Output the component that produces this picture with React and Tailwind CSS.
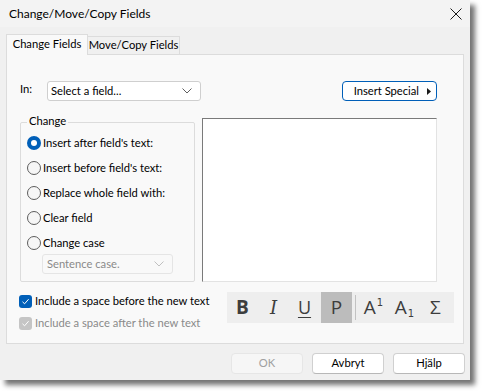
import React from "react";

const F = "font-['Segoe_UI','Lato',sans-serif]";
const T = "text-[11.2px]";

function Radio({ checked, label }) {
  return (
    <div className="flex items-center h-[14px]">
      {checked ? (
        <span className="w-[14px] h-[14px] rounded-full bg-[#005fb8] flex items-center justify-center shrink-0">
          <span className="w-[6px] h-[6px] rounded-full bg-white" />
        </span>
      ) : (
        <span className="w-[14px] h-[14px] rounded-full border border-[#5d5d5d] bg-[#f6f6f6] shrink-0" />
      )}
      <span className={"ml-[2px] text-black leading-none whitespace-nowrap " + T}>{label}</span>
    </div>
  );
}

function Check({ disabled, label }) {
  return (
    <div className="flex items-center h-[14px]">
      <span
        className={
          "w-[13px] h-[13px] rounded-[3px] flex items-center justify-center shrink-0 " +
          (disabled ? "bg-[#c5c5c5]" : "bg-[#005fb8]")
        }
      >
        <svg width="9" height="9" viewBox="0 0 9 9">
          <path d="M1.5 4.8 L3.6 6.8 L7.6 2.2" fill="none" stroke="white" strokeWidth="1" />
        </svg>
      </span>
      <span
        className={
          "ml-[3px] leading-none whitespace-nowrap " + T + " " +
          (disabled ? "text-[#8a8a8a]" : "text-black")
        }
      >
        {label}
      </span>
    </div>
  );
}

function Chevron({ color = "#5f5f5f" }) {
  return (
    <svg width="10" height="6" viewBox="0 0 10 6">
      <path d="M0.5 0.5 L5 5 L9.5 0.5" fill="none" stroke={color} strokeWidth="1" />
    </svg>
  );
}

export default function App() {
  return (
    <div className={"w-[485px] h-[391px] bg-white " + F}>
      <div className="w-[470px] h-[380px] bg-[#f0f0f0] flex flex-col shadow-[5px_5px_5px_rgba(0,0,0,0.55)]">
        {/* title bar */}
        <div className="h-[27px] bg-[#f3f3f3] flex items-center justify-between pl-[9px] pr-[7px]">
          <span className="text-[12px] text-black whitespace-nowrap">Change/Move/Copy Fields</span>
          <svg width="12" height="12" viewBox="0 0 12 12" className="mr-[1px]">
            <path d="M0.5 0.5 L11.5 11.5 M11.5 0.5 L0.5 11.5" stroke="#1a1a1a" strokeWidth="1" />
          </svg>
        </div>

        {/* tabs */}
        <div className="flex items-end pl-[6px] mt-[7px] h-[21px] relative z-10">
          <div className="h-[21px] w-[82px] bg-[#f9f9f9] border border-b-0 border-[#dcdcdc] flex items-center justify-center">
            <span className={"text-black whitespace-nowrap -mt-[1px] " + T}>Change Fields</span>
          </div>
          <div className="h-[18px] w-[92px] mb-[1px] bg-[#f0f0f0] border border-l-0 border-b-0 border-[#dcdcdc] flex items-center justify-center">
            <span className={"text-black whitespace-nowrap " + T}>Move/Copy Fields</span>
          </div>
        </div>

        {/* panel */}
        <div className="ml-[6px] -mt-px w-[458px] h-[290px] bg-[#f9f9f9] border border-[#dcdcdc] flex flex-col pl-[13px]">
          {/* row 1 */}
          <div className="flex items-center mt-[26px] h-[20px]">
            <span className={"text-black w-[27px] leading-none mt-[-4px] " + T}>In:</span>
            <div className="w-[154px] h-[20px] bg-white border border-[#cfcfcf] rounded-[3px] flex items-center justify-between pl-[3px] pr-[8px]">
              <span className={"text-black leading-none whitespace-nowrap " + T}>Select a field...</span>
              <Chevron />
            </div>
            <div className="ml-[141px] w-[95px] h-[20px] bg-white border border-[#005fb8] rounded-[4px] flex items-center justify-end pr-[5px]">
              <span className={"text-black leading-none whitespace-nowrap " + T}>Insert Special</span>
              <svg width="4" height="7" viewBox="0 0 4 7" className="ml-[8px]">
                <path d="M0 0 L4 3.5 L0 7 Z" fill="#1a1a1a" />
              </svg>
            </div>
          </div>

          {/* row 2 */}
          <div className="flex mt-[17px]">
            <div className="relative w-[175px] h-[160px] mt-[4px] border border-[#dcdcdc] rounded-[2px] flex flex-col pl-[6px] pt-[13px]">
              <span className={"absolute left-[6px] -top-[8px] px-[2px] bg-[#f9f9f9] text-black leading-none " + T}>
                Change
              </span>
              <div className="flex flex-col gap-[11px]">
                <Radio checked label="Insert after field's text:" />
                <Radio label="Insert before field's text:" />
                <Radio label="Replace whole field with:" />
                <Radio label="Clear field" />
                <Radio label="Change case" />
              </div>
              <div className="ml-[15px] mt-[4px] w-[131px] h-[20px] bg-[#f9f9f9] border border-[#e5e5e5] rounded-[3px] flex items-center justify-between pl-[4px] pr-[8px]">
                <span className={"text-[#8a8a8a] leading-none whitespace-nowrap " + T}>Sentence case.</span>
                <Chevron color="#c0c0c0" />
              </div>
            </div>
            <div className="ml-[7px] w-[235px] h-[164px] bg-white border border-t-[#7a7a7a] border-l-[#7a7a7a] border-r-[#e3e3e3] border-b-[#e3e3e3]" />
          </div>

          {/* row 3 */}
          <div className="flex mt-[10px]">
            <div className="flex flex-col gap-[8px] mt-[2px] -ml-[1px]">
              <Check label="Include a space before the new text" />
              <Check disabled label="Include a space after the new text" />
            </div>
            <div className="ml-auto mr-[9px] w-[227px] h-[31px] bg-[#eeeeee] flex items-center text-[#3d3d3d]">
              <div className="w-[31px] h-[31px] flex items-center justify-center text-[19px] font-bold font-['Open_Sans',sans-serif]">B</div>
              <div className="w-[31px] h-[31px] flex items-center justify-center text-[18px] italic font-['DejaVu_Serif',serif]">I</div>
              <div className="w-[31px] h-[31px] flex items-center justify-center text-[18px] underline underline-offset-[3px] font-['Open_Sans',sans-serif]">U</div>
              <div className="w-[31px] h-[31px] ml-[1px] bg-[#bcbcbc] flex items-center justify-center text-[19px] font-['Open_Sans',sans-serif]">P</div>
              <div className="w-px h-[25px] bg-[#c2c2c2] ml-[3px] mr-[2px]" />
              <div className="w-[31px] h-[31px] flex items-center justify-center text-[19px] font-['Open_Sans',sans-serif]">
                A<span className="text-[10px] -mt-[10px] ml-[1px] font-['DejaVu_Sans',sans-serif]">1</span>
              </div>
              <div className="w-[31px] h-[31px] flex items-center justify-center text-[19px] font-['Open_Sans',sans-serif]">
                A<span className="text-[10px] mt-[12px] ml-[1px] font-['DejaVu_Sans',sans-serif]">1</span>
              </div>
              <div className="w-[31px] h-[31px] flex items-center justify-center text-[19px] font-['Open_Sans',sans-serif]">Σ</div>
            </div>
          </div>
        </div>

        {/* buttons */}
        <div className="flex mt-[9px] ml-[231px] gap-[9px]">
          <div className={"w-[72px] h-[21px] bg-[#f6f6f6] border border-[#e6e6e6] rounded-[4px] flex items-center justify-center text-[#a0a0a0] " + T}>OK</div>
          <div className={"w-[72px] h-[21px] bg-white border border-[#d0d0d0] border-b-[#b8b8b8] rounded-[4px] flex items-center justify-center text-black " + T}>Avbryt</div>
          <div className={"w-[72px] h-[21px] bg-white border border-[#d0d0d0] border-b-[#b8b8b8] rounded-[4px] flex items-center justify-center text-black " + T}>Hjälp</div>
        </div>
      </div>
    </div>
  );
}
